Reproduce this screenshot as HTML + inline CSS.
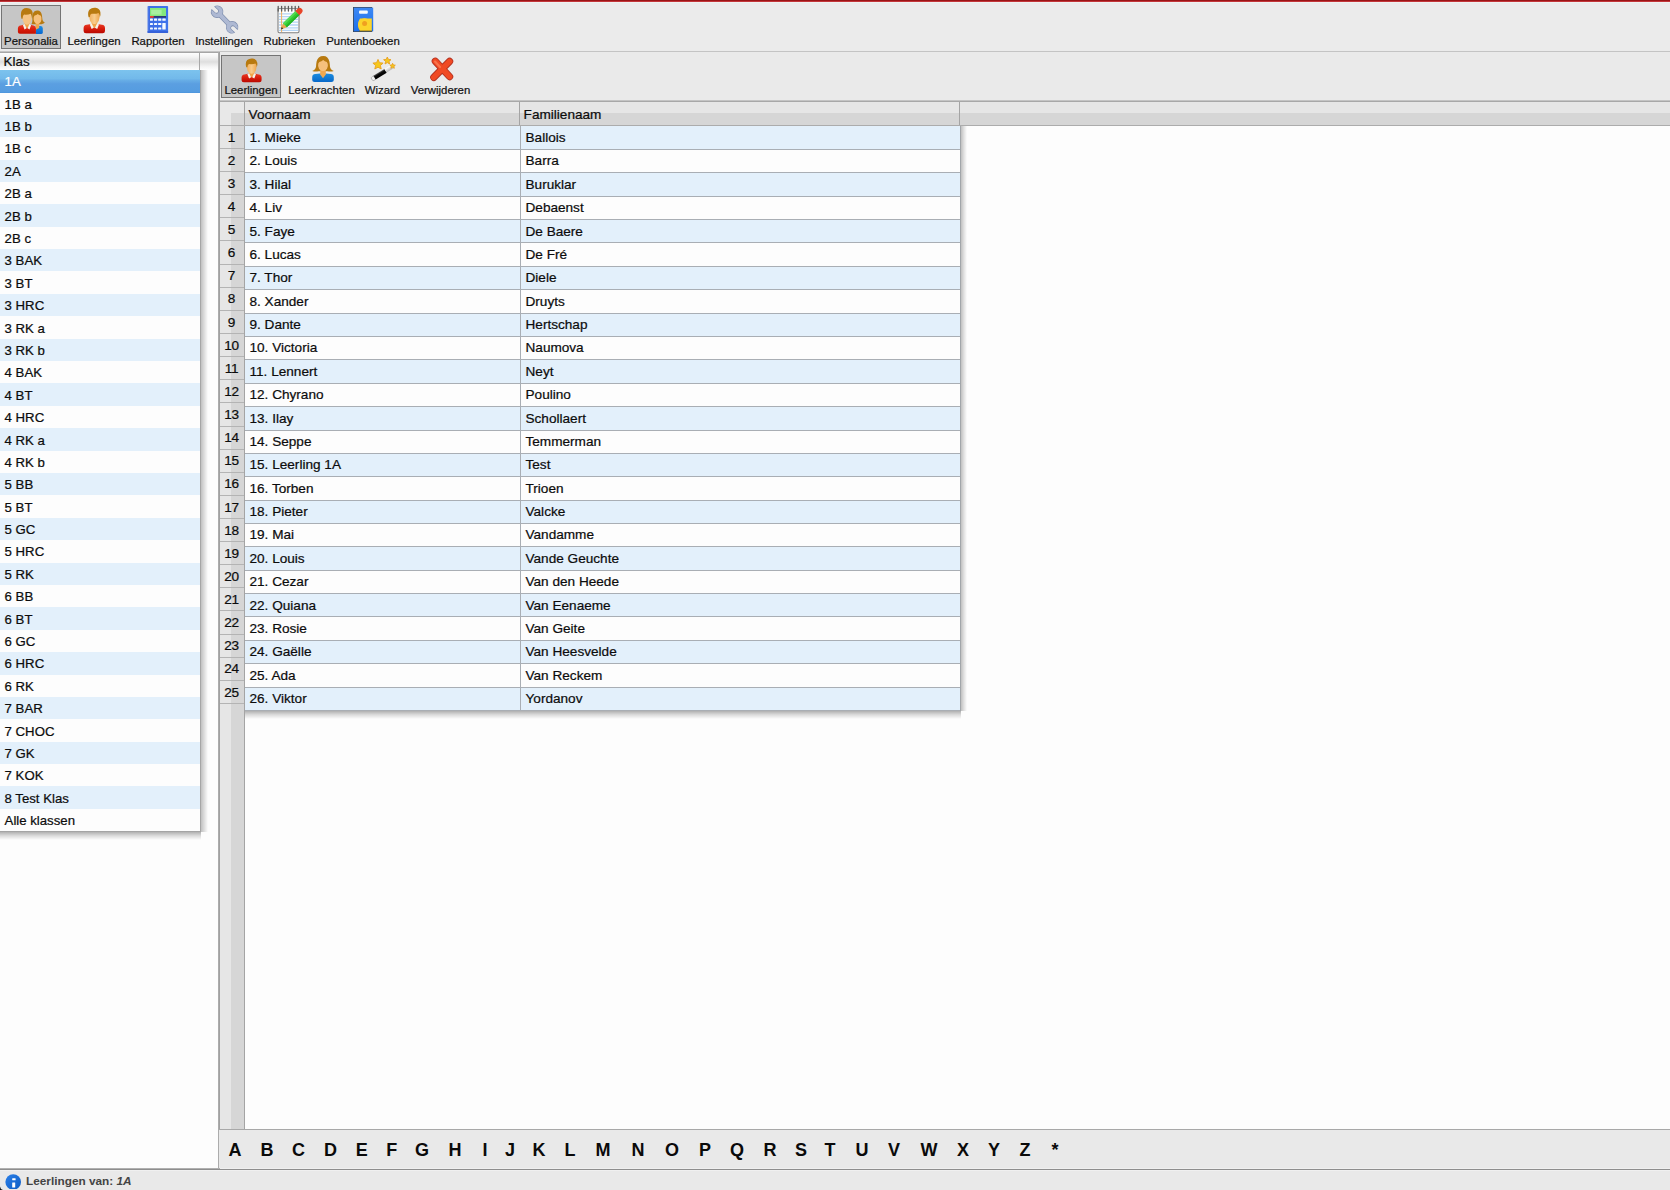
<!DOCTYPE html>
<html lang="nl">
<head>
<meta charset="utf-8">
<title>Personalia - Leerlingen</title>
<style>
html,body{margin:0;padding:0}
body{width:1670px;height:1190px;position:relative;overflow:hidden;background:#ebebeb;font-family:"Liberation Sans",sans-serif;color:#0c0c0c;-webkit-text-stroke:0.22px #0c0c0c}
body>div{position:absolute}
#redline{left:0;top:0;width:1670px;height:3px;background:linear-gradient(#9a1416 0,#9a1416 33.3%,#c3363a 33.4%,#c3363a 66.6%,#eef1f1 66.7%,#eef1f1 100%)}
#toolbar{left:0;top:3px;width:1670px;height:48px;background:#ebebeb}
#tbline{left:0;top:51px;width:1670px;height:1px;background:#c4c4c4}
#tbline2{left:0;top:52px;width:220px;height:1px;background:#a6a6a6}
.selbox{background:#c6c6c6;border:1px solid #747474;box-sizing:border-box}
#btn-main-sel{left:1px;top:5px;width:60px;height:44px}
#btn-sub-sel{left:221px;top:55px;width:60px;height:43px}
.tbtn{width:100px;height:48px}
.tbtn .ico{position:absolute;left:34px;top:1px;width:32px;height:32px}
.tbtn .ico svg{display:block;width:32px;height:32px}
.tbtn .lbl{position:absolute;left:0;width:100px;top:31px;text-align:center;font-size:11.4px;line-height:14px;white-space:nowrap;color:#151515}
#left{left:0;top:53px;width:218px;height:1115px;background:#fdfdfd}
#klashdr{left:0;top:53px;width:218px;height:17px;background:linear-gradient(#fefefe 0%,#f2f2f2 25%,#dedede 52%,#f4f4f4 80%,#fefefe 100%)}
#klashdr span{position:absolute;left:3.6px;top:0.5px;font-size:13.4px;line-height:15px}
#klassep{left:199px;top:53px;width:1px;height:17px;background:#a8a8a8}
#klist{left:0;top:70px;width:200px;height:761px;background:#fdfdfd;border-right:1px solid #a6a6a6;border-bottom:1px solid #a4a4a4}
.kr{position:absolute;left:0;width:200px;height:22.39px}
.kr.odd{background:#e3f0fb}
.kr.even{background:#fdfdfd}
.kr.sel{z-index:2;-webkit-text-stroke:0.22px #fff;background:linear-gradient(#7cc3ee 0%,#72b9ea 38%,#67ade6 45%,#5b9fe1 60%,#559ce0 95%,#4a93db 100%);height:23px;color:#fff}
.kr span{position:absolute;left:4.6px;top:4.3px;font-size:13.2px;line-height:15px;white-space:nowrap}
#klistshR{left:201px;top:70px;width:7px;height:762px;background:linear-gradient(90deg,rgba(0,0,0,.24),rgba(0,0,0,.13) 45%,rgba(0,0,0,0))}
#klistshB{left:0;top:832px;width:201px;height:8px;background:linear-gradient(180deg,rgba(0,0,0,.30),rgba(0,0,0,.14) 45%,rgba(0,0,0,0))}
#splitter{left:218px;top:52px;width:2px;height:1116px;background:linear-gradient(90deg,#acacac 0,#acacac 50%,#a0a0a0 50%,#a0a0a0 100%)}
#subbar{left:220px;top:52px;width:1450px;height:48px;background:#eaeaea}
#subline{left:220px;top:100px;width:1450px;height:2px;background:linear-gradient(#c4c4c4 0,#c4c4c4 50%,#a8a8a8 50%,#a8a8a8 100%)}
#tarea{left:245px;top:126px;width:1425px;height:1003px;background:#fdfdfd}
#thead{left:220px;top:102px;width:1450px;height:24px;background:linear-gradient(#e6e6e6 0,#e6e6e6 46%,#d6d6d6 46%,#d6d6d6 100%);border-bottom:1px solid #acacac;box-sizing:border-box}
#thead>div{position:absolute;top:0;height:23px}
#thead .c0{left:0;width:24px;border-right:1px solid #a4a4a4;background:linear-gradient(#e8e8e8 0,#e8e8e8 46%,transparent 46%)}
#thead .hl{left:0;width:11px;background:#e8e8e8}
#thead .c1{left:25px;width:274px;border-right:1px solid #a4a4a4}
#thead .c2{left:300px;width:439px;border-right:1px solid #a4a4a4}
#thead span{position:absolute;left:3.6px;top:4.5px;font-size:13.6px;line-height:15px;white-space:nowrap}
#gutter{left:220px;top:126px;width:24px;height:1003px;background:#e6e6e6;border-right:1px solid #a4a4a4}
#gutter .gd{position:absolute;left:11px;top:0;width:13px;height:1003px;background:#d6d6d6}
.gr{position:absolute;left:0;width:24px;border-bottom:1px solid #b4b4b4;box-sizing:border-box}
.gr span{position:absolute;left:-0.5px;width:24px;top:3px;text-align:center;font-size:13.6px;line-height:15px;letter-spacing:-0.3px}
#tbody{left:245px;top:126px;width:715px;height:585px;background:#fdfdfd;border-right:1px solid #a2a6aa}
#tbshR{left:961px;top:126px;width:6px;height:585px;background:linear-gradient(90deg,rgba(0,0,0,.24),rgba(0,0,0,.12) 45%,rgba(0,0,0,0))}
#tbshB{left:245px;top:711px;width:716px;height:8px;background:linear-gradient(180deg,rgba(0,0,0,.30),rgba(0,0,0,.14) 45%,rgba(0,0,0,0))}
.tr{position:absolute;left:0;width:715px;border-bottom:1px solid #a9aeb4;box-sizing:border-box}
.tr.b{background:#e3f0fb}
.tr.w{background:#fdfdfd}
.td1{position:absolute;left:0;top:0;width:275px;height:100%;border-right:1px solid #a9aeb4}
.td2{position:absolute;left:276px;top:0;width:439px;height:100%}
.tr span{position:absolute;left:4.5px;top:4px;font-size:13.6px;line-height:15px;white-space:nowrap}
#alpha{left:219px;top:1129px;width:1451px;height:40px;background:#e9e9e9;border-top:1px solid #a8a8a8;border-bottom:1px solid #f0f0f0;box-sizing:border-box}
.al{-webkit-text-stroke:0;position:absolute;top:9px;width:30px;text-align:center;font-size:18px;line-height:22px;font-weight:bold;color:#0a0a0a}
#status{left:0;top:1169px;width:1670px;height:21px;background:linear-gradient(#f0f0f0 0,#f0f0f0 1px,#e9e9e9 1px,#e9e9e9 100%);border-top:1px solid #8e8e8e;box-sizing:border-box}
#stl{left:0;top:1168px;width:220px;height:1px;background:#b0b0b0}
#status .info{position:absolute;left:4.8px;top:1.7px;width:17px;height:17px}
#status .info svg{display:block}
#status .st{position:absolute;left:26px;top:3.5px;font-size:11.8px;line-height:14px;font-weight:bold;color:#444;-webkit-text-stroke:0;white-space:nowrap}

#klistshC{left:201px;top:832px;width:8px;height:9px;background:radial-gradient(circle at 0 0,rgba(0,0,0,.2),rgba(0,0,0,.08) 45%,rgba(0,0,0,0) 75%)}
#tbshC{left:961px;top:711px;width:8px;height:9px;background:radial-gradient(circle at 0 0,rgba(0,0,0,.2),rgba(0,0,0,.08) 45%,rgba(0,0,0,0) 75%)}
#corner{left:0;top:1186px;width:4px;height:4px}
#corner svg{display:block}

</style>
</head>
<body>
<div id="redline"></div>
<div id="toolbar"></div>
<div id="tbline"></div>
<div id="tbline2"></div>
<div id="btn-main-sel" class="selbox"></div>
<div class="tbtn" style="left:-19px;top:3px"><div class="ico"><svg viewBox="0 0 32 32"><defs><linearGradient id="ppS" x1="0" y1="0" x2="0" y2="1"><stop offset="0" stop-color="#e8402a"/><stop offset=".5" stop-color="#d81c0c"/><stop offset="1" stop-color="#c41000"/></linearGradient><linearGradient id="ppB" x1="0" y1="0" x2="0" y2="1"><stop offset="0" stop-color="#1c8ce0"/><stop offset="1" stop-color="#0868d0"/></linearGradient></defs>
<g transform="translate(-2 .4)">
<path d="M23 21.6h4.4q2.4 0 2.4 2.4V28q0 1.6-1.8 1.6H23z" fill="url(#ppB)"/>
<path d="M24.8 6.2q-3.8-.2-5 3.4-.7 2.6-.4 5.8.2 2.6-1 4.4h10q2.6-.4 3.4-1.6-2.2-.8-2.4-3-.2-3.6-.8-5.6-1-3.2-3.8-3.4z" fill="#b87a10"/>
<path d="M22.6 18.6h3.6v5l-3.6 1.8z" fill="#f0a850"/>
<path d="M20.6 15q-.2-2.8 1-3.8 2-.3 3.2-1.6 1.2 1.4 2.8 1.6 1.1 1.2.9 3.8-.3 2.8-2.3 4.2-1.7.9-3.3 0-2-1.4-2.3-4.2z" fill="#f6c07c"/>
</g>
<g transform="translate(-1.2 0) scale(.93 1)">
<path d="M4.4 27.8V24.6q0-2.8 2.8-3.2l4.2-.8h5.6l4.2.8q2.6.4 2.6 3.2V29.8H6.6q-2.2 0-2.2-2z" fill="url(#ppS)"/>
<path d="M11.5 17h5.4v4.6l-2.7 3-2.7-3z" fill="#f0a448"/>
<path d="M9.8 20.9l1.8-.9 2.1 4.2-2.2 1.2zM18.6 20.9l-1.8-.9-2.1 4.2 2.2 1.2z" fill="#f6f2e8"/>
<ellipse cx="14.2" cy="13.2" rx="4.9" ry="7.6" fill="#f6c484"/>
<path d="M8.2 14.7Q6.6 8 9.4 5.4 12 3.6 15.4 4.2q4.2.8 4.8 4.4.5 3-.6 6.2-.4-3.4-1.4-5.1-2.8 1.2-7 .9-1.6.6-1.8 4.2z" fill="#b87a10"/>
</g>
</svg></div><span class="lbl">Personalia</span></div>
<div class="tbtn" style="left:44px;top:3px"><div class="ico"><svg viewBox="0 0 32 32"><defs><linearGradient id="lgS" x1="0" y1="0" x2="0" y2="1"><stop offset="0" stop-color="#e8402a"/><stop offset=".5" stop-color="#d81c0c"/><stop offset="1" stop-color="#b80800"/></linearGradient><linearGradient id="lgF" x1="0" y1="0" x2="1" y2="0"><stop offset="0" stop-color="#f2b060"/><stop offset=".5" stop-color="#f8cc8c"/><stop offset="1" stop-color="#f0a850"/></linearGradient></defs><path d="M5.6 27V24.2q0-3 3-3.4l4.6-.9h6.2l4.6.9q3 .4 3 3.4V27q0 2.2-2.4 2.2H8q-2.4 0-2.4-2.2z" fill="url(#lgS)"/><path d="M13.6 17h5.6v4.2l-2.8 3-2.8-3z" fill="#f0a448"/><path d="M11.8 20.4l1.9-.9 2.2 4.3-2.3 1.3zM21 20.4l-1.9-.9-2.2 4.3 2.3 1.3z" fill="#f6f2e8"/><path d="M11.3 10q0-4 5.1-4t5.1 4v3.6q0 3.4-2.6 5.6-2.5 1.7-5 0-2.6-2.2-2.6-5.6z" fill="url(#lgF)"/><path d="M10.6 13.2Q9.2 8 11.6 5.4 14 3.3 17.6 3.8q4.2.8 4.8 4.4.4 2.6-.5 5-.3-2.6-1.3-4.2-3 1.2-7 .7-1.7.5-1.8 3.4z" fill="#b87a10"/></svg></div><span class="lbl">Leerlingen</span></div>
<div class="tbtn" style="left:108px;top:3px"><div class="ico"><svg viewBox="0 0 32 32"><defs><linearGradient id="rpB" x1="0" y1="0" x2="1" y2="0"><stop offset="0" stop-color="#5a82e8"/><stop offset=".1" stop-color="#3c6ce4"/><stop offset="1" stop-color="#3e74ec"/></linearGradient></defs><rect x="5.5" y="1.9" width="20.6" height="27" rx=".8" fill="url(#rpB)"/><rect x="5.5" y="27.2" width="20.6" height="1.7" fill="#3560d8"/><rect x="8" y="4" width="16" height="8" fill="#84e87c"/><rect x="9.2" y="5.8" width="10.4" height="4.8" fill="#a8f0a0"/><rect x="8" y="12" width="16" height="1.8" fill="#2c3a78"/><rect x="8" y="12" width="3.7" height="1.8" fill="#f04030"/><g fill="#f4faff"><rect x="8" y="14.5" width="2.9" height="2.2" rx=".5"/><rect x="12" y="14.5" width="3.1" height="2.2" rx=".5"/><rect x="16.1" y="14.5" width="3.2" height="2.2" rx=".5"/><rect x="20.3" y="14.5" width="3.4" height="2.2" rx=".5"/><rect x="8" y="18.9" width="2.9" height="2.2" rx=".5"/><rect x="12" y="18.9" width="3.1" height="2.2" rx=".5"/><rect x="16.1" y="18.9" width="3.2" height="2.2" rx=".5"/><rect x="20.3" y="18.9" width="3.4" height="6.7" rx=".5"/><rect x="8" y="23.4" width="2.9" height="2.2" rx=".5"/><rect x="12" y="23.4" width="3.1" height="2.2" rx=".5"/><rect x="16.1" y="23.4" width="3.2" height="2.2" rx=".5"/></g></svg></div><span class="lbl">Rapporten</span></div>
<div class="tbtn" style="left:174px;top:3px"><div class="ico"><svg viewBox="0 0 32 32"><g transform="translate(16.6 15.5) rotate(46)"><g fill="#7f8fae" stroke="#7f8fae" stroke-width="1.3" stroke-linejoin="round"><path d="M-8.5-1.9h17v3.8h-17z"/><path d="M-15.9-2.4h4.2a2.4 2.4 0 0 1 0 4.8h-4.2a5.6 5.6 0 1 0 0-4.8z" transform="rotate(-3 -11 0)"/><path d="M15.9 2.4h-4.2a2.4 2.4 0 0 1 0-4.8h4.2a5.6 5.6 0 1 0 0 4.8z" transform="rotate(-3 11 0)"/></g><g fill="#aeb9d3"><path d="M-8.5-1.9h17v3.8h-17z"/><path d="M-15.9-2.4h4.2a2.4 2.4 0 0 1 0 4.8h-4.2a5.6 5.6 0 1 0 0-4.8z" transform="rotate(-3 -11 0)"/><path d="M15.9 2.4h-4.2a2.4 2.4 0 0 1 0-4.8h4.2a5.6 5.6 0 1 0 0 4.8z" transform="rotate(-3 11 0)"/></g></g></svg></div><span class="lbl">Instellingen</span></div>
<div class="tbtn" style="left:239.5px;top:3px"><div class="ico"><svg viewBox="0 0 32 32"><path d="M4 4.6h21v22.7q0 1.4-1.4 1.4H5.4q-1.4 0-1.4-1.4z" fill="#fdfdfd"/><g stroke="#b4d4f4" stroke-width="1.3"><path d="M5 9.8h19M5 12.6h19M5 15.4h19M5 18.2h19M5 21h19M5 23.8h19M5 26.4h19"/></g><path d="M7.6 6v22" stroke="#f0b060" stroke-width="1"/><path d="M4 4.6v22.7q0 1.4 1.4 1.4h18.2q1.4 0 1.4-1.4V4.6" fill="none" stroke="#808080" stroke-width="1.1"/><path d="M4 4.6h21" stroke="#8a8a8a" stroke-width="1"/><g stroke="#5c5c5c" stroke-width="1.3" stroke-linecap="round"><path d="M4.2 2.4v4.6M7.6 2.4v4.6M11 2.4v4.6M14.4 2.4v4.6M17.8 2.4v4.6M21.2 2.4v4.6M24.6 2.4v4.6"/></g><g transform="translate(6.8 25.4) rotate(-44.5)"><path d="M0 0l6-2.8v5.6z" fill="#e8a850"/><path d="M0 0l2.4-1.1v2.2z" fill="#303030"/><rect x="5.8" y="-2.8" width="17.6" height="5.6" fill="#34cc34"/><rect x="5.8" y="-2.8" width="17.6" height="1.9" fill="#54dc54"/><rect x="5.8" y="1.1" width="17.6" height="1.7" fill="#24b424"/><path d="M23.2-2.9h3.2a2.9 2.9 0 0 1 0 5.8h-3.2z" fill="#e84428"/></g></svg></div><span class="lbl">Rubrieken</span></div>
<div class="tbtn" style="left:313px;top:3px"><div class="ico"><svg viewBox="0 0 32 32"><defs><linearGradient id="pbB" x1="0" y1="0" x2="0" y2="1"><stop offset="0" stop-color="#3c88f4"/><stop offset="1" stop-color="#1c70ec"/></linearGradient></defs><rect x="6" y="3" width="19.2" height="25" fill="#3c4858"/><rect x="6.8" y="3.7" width="19.4" height="23.6" fill="url(#pbB)"/><rect x="12" y="6.5" width="8.8" height="3.3" rx="1" fill="#f4faff"/><path d="M13 14.5h11.8v12.5H13q-2-2.5-2-6.2t2-6.3z" fill="#fcd42c"/><circle cx="17.5" cy="20.6" r="6.4" fill="#fcd42c"/><circle cx="17.6" cy="19.4" r="2.5" fill="#f0a020"/><path d="M12 27.1h13" stroke="#6c5a20" stroke-width=".9"/></svg></div><span class="lbl">Puntenboeken</span></div>
<div id="left"></div>
<div id="klashdr"><span>Klas</span></div>
<div id="klassep"></div>
<div id="klist">
<div class="kr sel" style="top:0.00px"><span>1A</span></div>
<div class="kr even" style="top:22.39px"><span>1B a</span></div>
<div class="kr odd" style="top:44.78px"><span>1B b</span></div>
<div class="kr even" style="top:67.17px"><span>1B c</span></div>
<div class="kr odd" style="top:89.56px"><span>2A</span></div>
<div class="kr even" style="top:111.95px"><span>2B a</span></div>
<div class="kr odd" style="top:134.34px"><span>2B b</span></div>
<div class="kr even" style="top:156.73px"><span>2B c</span></div>
<div class="kr odd" style="top:179.12px"><span>3 BAK</span></div>
<div class="kr even" style="top:201.51px"><span>3 BT</span></div>
<div class="kr odd" style="top:223.90px"><span>3 HRC</span></div>
<div class="kr even" style="top:246.29px"><span>3 RK a</span></div>
<div class="kr odd" style="top:268.68px"><span>3 RK b</span></div>
<div class="kr even" style="top:291.07px"><span>4 BAK</span></div>
<div class="kr odd" style="top:313.46px"><span>4 BT</span></div>
<div class="kr even" style="top:335.85px"><span>4 HRC</span></div>
<div class="kr odd" style="top:358.24px"><span>4 RK a</span></div>
<div class="kr even" style="top:380.63px"><span>4 RK b</span></div>
<div class="kr odd" style="top:403.02px"><span>5 BB</span></div>
<div class="kr even" style="top:425.41px"><span>5 BT</span></div>
<div class="kr odd" style="top:447.80px"><span>5 GC</span></div>
<div class="kr even" style="top:470.19px"><span>5 HRC</span></div>
<div class="kr odd" style="top:492.58px"><span>5 RK</span></div>
<div class="kr even" style="top:514.97px"><span>6 BB</span></div>
<div class="kr odd" style="top:537.36px"><span>6 BT</span></div>
<div class="kr even" style="top:559.75px"><span>6 GC</span></div>
<div class="kr odd" style="top:582.14px"><span>6 HRC</span></div>
<div class="kr even" style="top:604.53px"><span>6 RK</span></div>
<div class="kr odd" style="top:626.92px"><span>7 BAR</span></div>
<div class="kr even" style="top:649.31px"><span>7 CHOC</span></div>
<div class="kr odd" style="top:671.70px"><span>7 GK</span></div>
<div class="kr even" style="top:694.09px"><span>7 KOK</span></div>
<div class="kr odd" style="top:716.48px"><span>8 Test Klas</span></div>
<div class="kr even" style="top:738.87px"><span>Alle klassen</span></div>
</div>
<div id="klistshR"></div>
<div id="klistshB"></div>
<div id="splitter"></div>
<div id="subbar"></div>
<div id="subline"></div>
<div id="btn-sub-sel" class="selbox"></div>
<div class="tbtn" style="left:201px;top:52px"><div class="ico" style="transform:translate(.3px,.9px) scale(.935);transform-origin:16px 16.5px"><svg viewBox="0 0 32 32"><defs><linearGradient id="lgS" x1="0" y1="0" x2="0" y2="1"><stop offset="0" stop-color="#e8402a"/><stop offset=".5" stop-color="#d81c0c"/><stop offset="1" stop-color="#b80800"/></linearGradient><linearGradient id="lgF" x1="0" y1="0" x2="1" y2="0"><stop offset="0" stop-color="#f2b060"/><stop offset=".5" stop-color="#f8cc8c"/><stop offset="1" stop-color="#f0a850"/></linearGradient></defs><path d="M5.6 27V24.2q0-3 3-3.4l4.6-.9h6.2l4.6.9q3 .4 3 3.4V27q0 2.2-2.4 2.2H8q-2.4 0-2.4-2.2z" fill="url(#lgS)"/><path d="M13.6 17h5.6v4.2l-2.8 3-2.8-3z" fill="#f0a448"/><path d="M11.8 20.4l1.9-.9 2.2 4.3-2.3 1.3zM21 20.4l-1.9-.9-2.2 4.3 2.3 1.3z" fill="#f6f2e8"/><path d="M11.3 10q0-4 5.1-4t5.1 4v3.6q0 3.4-2.6 5.6-2.5 1.7-5 0-2.6-2.2-2.6-5.6z" fill="url(#lgF)"/><path d="M10.6 13.2Q9.2 8 11.6 5.4 14 3.3 17.6 3.8q4.2.8 4.8 4.4.4 2.6-.5 5-.3-2.6-1.3-4.2-3 1.2-7 .7-1.7.5-1.8 3.4z" fill="#b87a10"/></svg></div><span class="lbl">Leerlingen</span></div>
<div class="tbtn" style="left:271.5px;top:52px"><div class="ico"><svg viewBox="0 0 32 32"><defs><linearGradient id="lkS" x1="0" y1="0" x2="0" y2="1"><stop offset="0" stop-color="#1c8ce0"/><stop offset="1" stop-color="#0868c8"/></linearGradient></defs><path d="M17.4 2.9q-5.6 0-6.8 5.6-.5 2.7-.6 5.3-.3 2.8-3.8 4.2 3 1 6.4.2h8.8q3.4.8 6.4-.2-3.5-1.4-3.8-4.2-.1-2.6-.6-5.3-1.2-5.6-6-5.6z" fill="#b87a10"/><path d="M6.2 27V24.2q0-3 3-3.2l4.8-.4h6l4.8.4q3 .2 3 3.2V27q0 2.1-2.4 2.1H8.6q-2.4 0-2.4-2.1z" fill="url(#lkS)"/><path d="M14.2 16h5.6v5.6l-2.8 3.6-2.8-3.6z" fill="#f0a850"/><path d="M12.1 13q-.2-3 1.2-4.1 2.4-.4 3.9-1.8 1.5 1.5 3.6 1.8 1.3 1.3 1.1 4.1-.3 3-2.8 4.5-2.2 1-4.2 0-2.5-1.5-2.8-4.5z" fill="#f6c07c"/></svg></div><span class="lbl">Leerkrachten</span></div>
<div class="tbtn" style="left:332.5px;top:52px"><div class="ico"><svg viewBox="0 0 32 32"><defs><linearGradient id="wzW" x1="0" y1="0" x2="0" y2="1"><stop offset="0" stop-color="#585858"/><stop offset=".35" stop-color="#0c0c0c"/><stop offset="1" stop-color="#000"/></linearGradient><linearGradient id="wzT" x1="0" y1="0" x2="0" y2="1"><stop offset="0" stop-color="#fff"/><stop offset="1" stop-color="#b8b8b8"/></linearGradient></defs><g transform="translate(4.8 26.4) rotate(-32)"><rect x="0" y="-2.1" width="4" height="4.2" rx="1.6" fill="#f2f2f2" stroke="#a8a8a8" stroke-width=".7"/><rect x="3.2" y="-2.2" width="13" height="4.4" fill="url(#wzW)"/><rect x="16.2" y="-2.1" width="8.2" height="4.2" rx="1" fill="url(#wzT)"/></g><g fill="#f6c81c" stroke="#e8a020" stroke-width=".9" stroke-linejoin="round"><path d="M11 6.4l1.5 3.3 3.6.4-2.7 2.4.8 3.5-3.2-1.8-3.2 1.8.8-3.5-2.7-2.4 3.6-.4z"/><path d="M20.3 4l1.1 2.4 2.6.3-2 1.7.6 2.6-2.3-1.4-2.3 1.4.6-2.6-2-1.7 2.6-.3z"/><path d="M25.6 10.3l.8 1.7 1.9.2-1.4 1.2.4 1.9-1.7-1-1.7 1 .4-1.9-1.4-1.2 1.9-.2z"/></g></svg></div><span class="lbl">Wizard</span></div>
<div class="tbtn" style="left:390.5px;top:52px"><div class="ico"><svg viewBox="0 0 32 32"><g stroke-linecap="round" fill="none"><path d="M10.3 8.2L24.6 23.6M24.6 8.4L8.8 24.4" stroke="#b03020" stroke-width="7.2"/><path d="M10.3 8.2L24.6 23.6M24.6 8.4L8.8 24.4" stroke="#f04a24" stroke-width="5.6"/><path d="M10 8.6L15 14" stroke="#f8744c" stroke-width="2.2"/></g></svg></div><span class="lbl">Verwijderen</span></div>
<div id="tarea"></div>
<div id="thead"><div class="hl"></div><div class="c0"></div><div class="c1"><span>Voornaam</span></div><div class="c2"><span>Familienaam</span></div><div class="c3"></div></div>
<div id="gutter"><div class="gd"></div>
<div class="gr" style="top:0px;height:23px"><span style="top:3.50px">1</span></div>
<div class="gr" style="top:23px;height:23px"><span style="top:3.62px">2</span></div>
<div class="gr" style="top:46px;height:23px"><span style="top:3.75px">3</span></div>
<div class="gr" style="top:69px;height:23px"><span style="top:3.88px">4</span></div>
<div class="gr" style="top:92px;height:23px"><span style="top:4.00px">5</span></div>
<div class="gr" style="top:115px;height:24px"><span style="top:4.12px">6</span></div>
<div class="gr" style="top:139px;height:23px"><span style="top:3.25px">7</span></div>
<div class="gr" style="top:162px;height:23px"><span style="top:3.38px">8</span></div>
<div class="gr" style="top:185px;height:23px"><span style="top:3.50px">9</span></div>
<div class="gr" style="top:208px;height:23px"><span style="top:3.62px">10</span></div>
<div class="gr" style="top:231px;height:23px"><span style="top:3.75px">11</span></div>
<div class="gr" style="top:254px;height:23px"><span style="top:3.88px">12</span></div>
<div class="gr" style="top:277px;height:24px"><span style="top:4.00px">13</span></div>
<div class="gr" style="top:301px;height:23px"><span style="top:3.12px">14</span></div>
<div class="gr" style="top:324px;height:23px"><span style="top:3.25px">15</span></div>
<div class="gr" style="top:347px;height:23px"><span style="top:3.38px">16</span></div>
<div class="gr" style="top:370px;height:23px"><span style="top:3.50px">17</span></div>
<div class="gr" style="top:393px;height:23px"><span style="top:3.62px">18</span></div>
<div class="gr" style="top:416px;height:23px"><span style="top:3.75px">19</span></div>
<div class="gr" style="top:439px;height:23px"><span style="top:3.88px">20</span></div>
<div class="gr" style="top:462px;height:23px"><span style="top:4.00px">21</span></div>
<div class="gr" style="top:485px;height:24px"><span style="top:4.12px">22</span></div>
<div class="gr" style="top:509px;height:23px"><span style="top:3.25px">23</span></div>
<div class="gr" style="top:532px;height:23px"><span style="top:3.38px">24</span></div>
<div class="gr" style="top:555px;height:23px"><span style="top:3.50px">25</span></div>
</div>
<div id="tbody">
<div class="tr b" style="top:0px;height:24px"><div class="td1"><span style="top:4.00px">1. Mieke</span></div><div class="td2"><span style="top:4.00px">Ballois</span></div></div>
<div class="tr w" style="top:24px;height:23px"><div class="td1"><span style="top:3.38px">2. Louis</span></div><div class="td2"><span style="top:3.38px">Barra</span></div></div>
<div class="tr b" style="top:47px;height:24px"><div class="td1"><span style="top:3.75px">3. Hilal</span></div><div class="td2"><span style="top:3.75px">Buruklar</span></div></div>
<div class="tr w" style="top:71px;height:23px"><div class="td1"><span style="top:3.12px">4. Liv</span></div><div class="td2"><span style="top:3.12px">Debaenst</span></div></div>
<div class="tr b" style="top:94px;height:23px"><div class="td1"><span style="top:3.50px">5. Faye</span></div><div class="td2"><span style="top:3.50px">De Baere</span></div></div>
<div class="tr w" style="top:117px;height:24px"><div class="td1"><span style="top:3.88px">6. Lucas</span></div><div class="td2"><span style="top:3.88px">De Fré</span></div></div>
<div class="tr b" style="top:141px;height:23px"><div class="td1"><span style="top:3.25px">7. Thor</span></div><div class="td2"><span style="top:3.25px">Diele</span></div></div>
<div class="tr w" style="top:164px;height:24px"><div class="td1"><span style="top:3.62px">8. Xander</span></div><div class="td2"><span style="top:3.62px">Druyts</span></div></div>
<div class="tr b" style="top:188px;height:23px"><div class="td1"><span style="top:3.00px">9. Dante</span></div><div class="td2"><span style="top:3.00px">Hertschap</span></div></div>
<div class="tr w" style="top:211px;height:23px"><div class="td1"><span style="top:3.38px">10. Victoria</span></div><div class="td2"><span style="top:3.38px">Naumova</span></div></div>
<div class="tr b" style="top:234px;height:24px"><div class="td1"><span style="top:3.75px">11. Lennert</span></div><div class="td2"><span style="top:3.75px">Neyt</span></div></div>
<div class="tr w" style="top:258px;height:23px"><div class="td1"><span style="top:3.12px">12. Chyrano</span></div><div class="td2"><span style="top:3.12px">Poulino</span></div></div>
<div class="tr b" style="top:281px;height:24px"><div class="td1"><span style="top:3.50px">13. Ilay</span></div><div class="td2"><span style="top:3.50px">Schollaert</span></div></div>
<div class="tr w" style="top:305px;height:23px"><div class="td1"><span style="top:2.88px">14. Seppe</span></div><div class="td2"><span style="top:2.88px">Temmerman</span></div></div>
<div class="tr b" style="top:328px;height:23px"><div class="td1"><span style="top:3.25px">15. Leerling 1A</span></div><div class="td2"><span style="top:3.25px">Test</span></div></div>
<div class="tr w" style="top:351px;height:24px"><div class="td1"><span style="top:3.62px">16. Torben</span></div><div class="td2"><span style="top:3.62px">Trioen</span></div></div>
<div class="tr b" style="top:375px;height:23px"><div class="td1"><span style="top:3.00px">18. Pieter</span></div><div class="td2"><span style="top:3.00px">Valcke</span></div></div>
<div class="tr w" style="top:398px;height:23px"><div class="td1"><span style="top:3.38px">19. Mai</span></div><div class="td2"><span style="top:3.38px">Vandamme</span></div></div>
<div class="tr b" style="top:421px;height:24px"><div class="td1"><span style="top:3.75px">20. Louis</span></div><div class="td2"><span style="top:3.75px">Vande Geuchte</span></div></div>
<div class="tr w" style="top:445px;height:23px"><div class="td1"><span style="top:3.12px">21. Cezar</span></div><div class="td2"><span style="top:3.12px">Van den Heede</span></div></div>
<div class="tr b" style="top:468px;height:23px"><div class="td1"><span style="top:3.50px">22. Quiana</span></div><div class="td2"><span style="top:3.50px">Van Eenaeme</span></div></div>
<div class="tr w" style="top:491px;height:24px"><div class="td1"><span style="top:3.88px">23. Rosie</span></div><div class="td2"><span style="top:3.88px">Van Geite</span></div></div>
<div class="tr b" style="top:515px;height:23px"><div class="td1"><span style="top:3.25px">24. Gaëlle</span></div><div class="td2"><span style="top:3.25px">Van Heesvelde</span></div></div>
<div class="tr w" style="top:538px;height:24px"><div class="td1"><span style="top:3.62px">25. Ada</span></div><div class="td2"><span style="top:3.62px">Van Reckem</span></div></div>
<div class="tr b" style="top:562px;height:23px"><div class="td1"><span style="top:3.00px">26. Viktor</span></div><div class="td2"><span style="top:3.00px">Yordanov</span></div></div>
</div>
<div id="tbshR"></div>
<div id="tbshB"></div>
<div id="alpha">
<span class="al" style="left:1px">A</span><span class="al" style="left:33px">B</span><span class="al" style="left:64.5px">C</span><span class="al" style="left:96.4px">D</span><span class="al" style="left:127.8px">E</span><span class="al" style="left:157.8px">F</span><span class="al" style="left:188px">G</span><span class="al" style="left:221px">H</span><span class="al" style="left:251px">I</span><span class="al" style="left:276px">J</span><span class="al" style="left:305px">K</span><span class="al" style="left:336px">L</span><span class="al" style="left:369px">M</span><span class="al" style="left:404px">N</span><span class="al" style="left:438px">O</span><span class="al" style="left:471px">P</span><span class="al" style="left:503px">Q</span><span class="al" style="left:536px">R</span><span class="al" style="left:567px">S</span><span class="al" style="left:596px">T</span><span class="al" style="left:628px">U</span><span class="al" style="left:660px">V</span><span class="al" style="left:695px">W</span><span class="al" style="left:729px">X</span><span class="al" style="left:760px">Y</span><span class="al" style="left:791px">Z</span><span class="al" style="left:821px">*</span>
</div>
<div id="stl"></div>
<div id="status"><div class="info"><svg width="17" height="17" viewBox="0 0 17 17"><defs><linearGradient id="inG" x1="0" y1="0" x2="1" y2="1"><stop offset="0" stop-color="#2c80e8"/><stop offset="1" stop-color="#0c5cc4"/></linearGradient></defs><circle cx="8.2" cy="10" r="7.8" fill="url(#inG)"/><rect x="7.2" y="6.2" width="3.4" height="2" rx=".5" fill="#fff"/><rect x="7.2" y="10.4" width="3" height="5.2" rx=".4" fill="#fff"/></svg></div><span class="st">Leerlingen van: <i>1A</i></span></div>
<div id="corner"><svg width="4" height="4" viewBox="0 0 4 4"><path d="M0 .4Q.3 3.4 3 4H0z" fill="#101010"/></svg></div>
</body>
</html>
